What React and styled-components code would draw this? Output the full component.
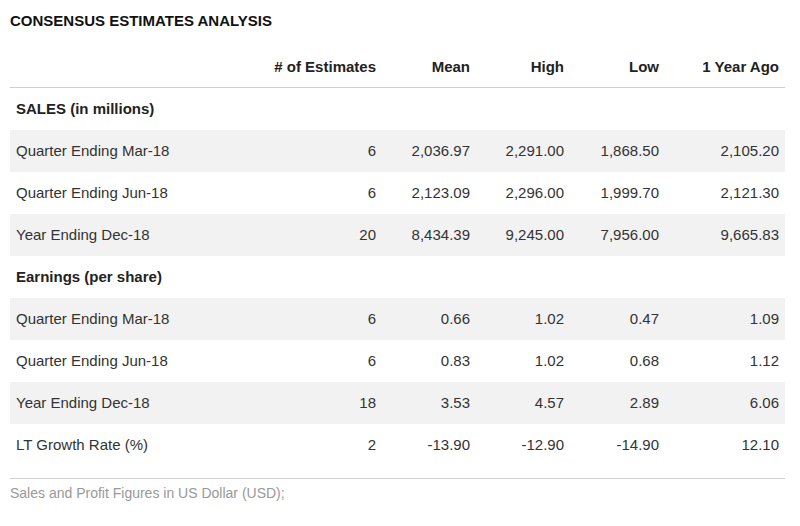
import React from "react";
import styled, { createGlobalStyle } from "styled-components";

const Global = createGlobalStyle`
  html, body { margin: 0; padding: 0; background: #fff; }
  body { font-family: "Liberation Sans", Arial, sans-serif; }
`;

const COLS = "1fr 118px 94px 94px 95px 120px";

const Page = styled.div`
  padding: 10px 15px 0 10px;
  width: 775px;
`;

const Title = styled.h2`
  margin: 0;
  font-size: 15px;
  line-height: 22px;
  font-weight: bold;
  color: #111;
  text-transform: uppercase;
`;

const Table = styled.div`
  margin-top: 14px;
`;

const HeadRow = styled.div`
  display: grid;
  grid-template-columns: ${COLS};
  height: 41px;
  align-items: center;
  border-bottom: 1px solid #d0d0d0;
`;

const Row = styled.div`
  display: grid;
  grid-template-columns: ${COLS};
  height: 42px;
  align-items: center;
  background: ${(p) => (p.$shade ? "#f2f2f2" : "transparent")};
`;

const Cell = styled.div`
  padding: 0 6px;
  font-size: 15px;
  line-height: 20px;
  color: ${(p) => (p.$head ? "#222" : "#333")};
  font-weight: ${(p) => (p.$head ? "bold" : "normal")};
  text-align: ${(p) => (p.$left ? "left" : "right")};
  white-space: nowrap;
`;

const Footer = styled.div`
  margin-top: 12px;
  border-top: 1px solid #d0d0d0;
  padding-top: 4px;
  font-size: 14px;
  line-height: 20px;
  color: #999;
`;

const headers = ["# of Estimates", "Mean", "High", "Low", "1 Year Ago"];

const sections = [
  {
    title: "SALES (in millions)",
    rows: [
      ["Quarter Ending Mar-18", "6", "2,036.97", "2,291.00", "1,868.50", "2,105.20"],
      ["Quarter Ending Jun-18", "6", "2,123.09", "2,296.00", "1,999.70", "2,121.30"],
      ["Year Ending Dec-18", "20", "8,434.39", "9,245.00", "7,956.00", "9,665.83"],
    ],
  },
  {
    title: "Earnings (per share)",
    rows: [
      ["Quarter Ending Mar-18", "6", "0.66", "1.02", "0.47", "1.09"],
      ["Quarter Ending Jun-18", "6", "0.83", "1.02", "0.68", "1.12"],
      ["Year Ending Dec-18", "18", "3.53", "4.57", "2.89", "6.06"],
      ["LT Growth Rate (%)", "2", "-13.90", "-12.90", "-14.90", "12.10"],
    ],
  },
];

export default function App() {
  return (
    <Page>
      <Global />
      <Title>Consensus Estimates Analysis</Title>
      <Table>
        <HeadRow>
          <Cell $left $head></Cell>
          {headers.map((h) => (
            <Cell key={h} $head>{h}</Cell>
          ))}
        </HeadRow>
        {sections.map((s) => (
          <React.Fragment key={s.title}>
            <Row>
              <Cell $left $head>{s.title}</Cell>
            </Row>
            {s.rows.map((r, i) => (
              <Row key={r[0]} $shade={i % 2 === 0}>
                {r.map((v, j) => (
                  <Cell key={j} $left={j === 0}>{v}</Cell>
                ))}
              </Row>
            ))}
          </React.Fragment>
        ))}
      </Table>
      <Footer>Sales and Profit Figures in US Dollar (USD);</Footer>
    </Page>
  );
}
